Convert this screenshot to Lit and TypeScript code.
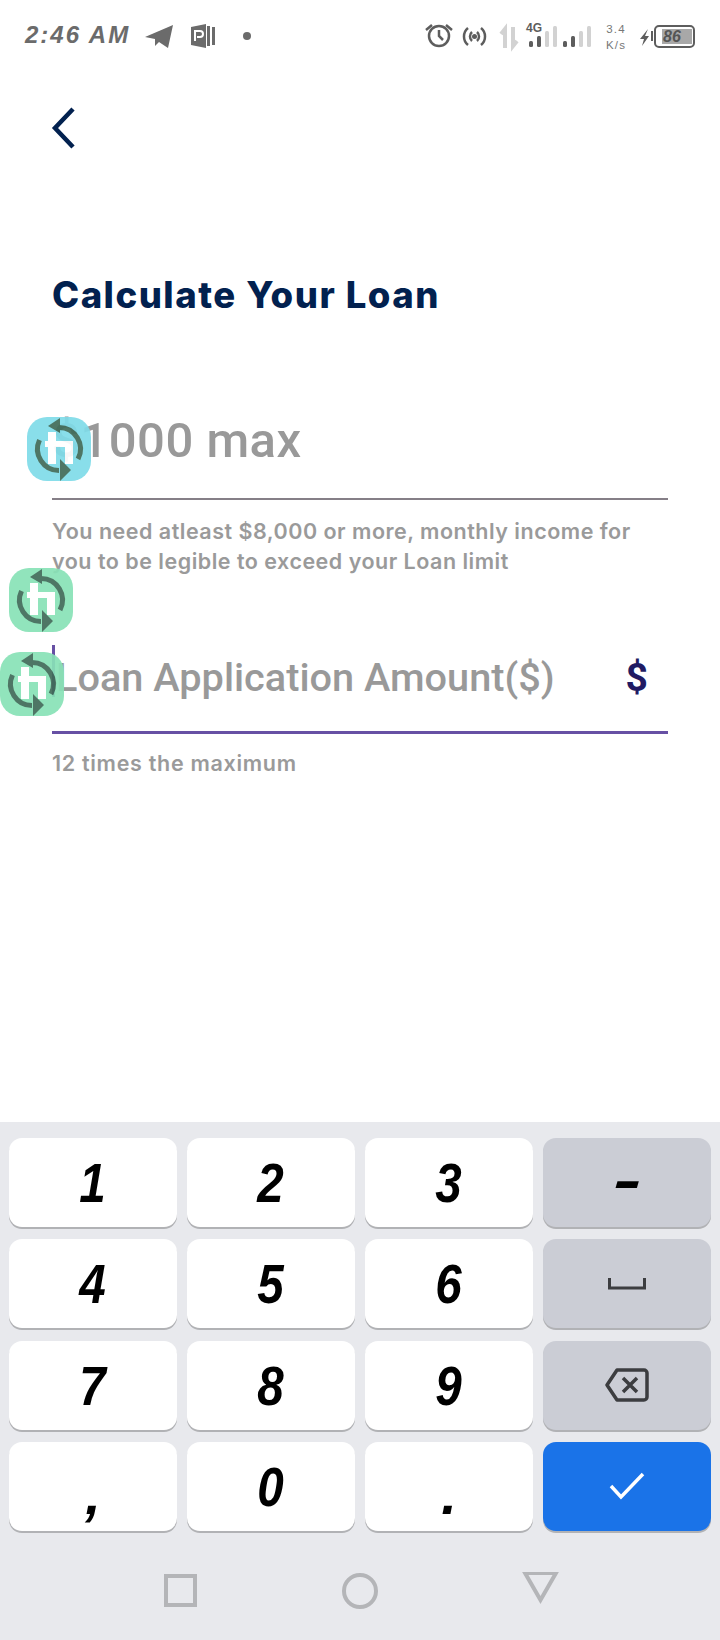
import { LitElement, html, css, svg } from 'lit';
import { customElement } from 'lit/decorators.js';

const syncIcon = (bg: string, cls: string) => html`
    <svg class="sync ${cls}" width="64" height="64" viewBox="0 0 64 64">
        <rect width="64" height="64" rx="20" fill="${bg}"></rect>
        <path d="M21 15h8v9h17v23h-8V30h-9v17h-8V30h-3v-6h3z" fill="#fff"></path>
        <path d="M32 10.500A21.500 21.500 0 0 1 51 42M12.500 23A21.500 21.500 0 0 0 32 53.500" fill="none" stroke="#3f6b58" stroke-width="5"></path>
        <path d="M21 9l12-8v15zM44 53L33 42v22z" fill="#3f6b58"></path>
    </svg>
`;

@customElement('app-root')
class AppRoot extends LitElement {
    static styles = css`
        :host {
            display: block;
            position: relative;
            width: 720px;
            height: 1640px;
            background: #fff;
            overflow: hidden;
            font-family: Roboto, sans-serif;
        }

        .status {
            height: 70px;
            display: flex;
            align-items: center;
            justify-content: space-between;
            padding: 0 20px 0 25px;
            box-sizing: border-box;
            color: #6b6b6b;
        }

        .status-left {
            display: flex;
            align-items: center;
        }

        .time {
            width: 120px;
            font: italic 700 24px 'Liberation Sans', sans-serif;
            letter-spacing: 2px;
            white-space: pre;
        }

        .back {
            display: block;
            margin: 36px 0 0 50px;
        }

        h1 {
            margin: 121px 0 0 52px;
            font: 800 36.500px/48px Inter, sans-serif;
            letter-spacing: 1.500px;
            color: #02214f;
        }

        .field {
            margin: 0 52px;
            display: flex;
            align-items: center;
            justify-content: space-between;
            box-sizing: border-box;
            color: #999;
            font-weight: 500;
        }

        .field.max {
            margin-top: 92px;
            height: 89px;
            padding-bottom: 29px;
            font-size: 49px;
            letter-spacing: 0.500px;
            border-bottom: 2px solid #857f87;
        }

        .field.amount {
            margin-top: 69px;
            height: 89px;
            font-size: 39.700px;
            border-bottom: 3px solid #6750a4;
        }

        .caret {
            width: 3px;
            height: 52px;
            background: #6750a4;
            margin: 0 1px 12px 0;
            flex: none;
        }

        .amount-label {
            display: flex;
            align-items: center;
            height: 52px;
            margin-bottom: 22px;
        }

        .dollar {
            font: 700 39px Roboto, sans-serif;
            color: #211b63;
            margin-right: 20px;
            margin-bottom: 20px;
        }

        .help {
            margin: 16px 52px 0;
            font: 600 21.500px/30px Inter, sans-serif;
            letter-spacing: 0.500px;
            color: #9a9a9a;
        }

        .help.short {
            margin-top: 14px;
            letter-spacing: 0.700px;
        }

        .sync {
            position: absolute;
            opacity: 0.92;
        }

        .sync.one {
            left: 27px;
            top: 417px;
        }

        .sync.two {
            left: 9px;
            top: 568px;
        }

        .sync.three {
            left: 0;
            top: 652px;
        }

        .keyboard {
            position: absolute;
            left: 0;
            right: 0;
            bottom: 0;
            height: 518px;
            background: #e8e9ed;
            box-sizing: border-box;
            padding-top: 16px;
        }

        .keys {
            display: grid;
            grid-template-columns: repeat(4, 168px);
            grid-auto-rows: 89px;
            column-gap: 10px;
            row-gap: 12.300px;
            padding: 0 9px;
        }

        .key {
            display: flex;
            align-items: center;
            justify-content: center;
            background: #fff;
            border-radius: 13px;
            box-shadow: 0 2px 0 #b1b2b5;
            color: #000;
            font: italic 700 56px 'Liberation Sans', sans-serif;
        }

        .key span {
            transform: scaleX(0.85);
        }

        .key.fn {
            background: #cbcdd5;
        }

        .key.ok {
            background: #1a73e8;
        }

        .key.low span {
            transform: translateY(8px);
        }

        .key.dash span {
            transform: translateY(-3px) scaleX(1.500);
        }

        .nav {
            margin-top: 41px;
        }

        .nav svg {
            display: block;
        }
    `;

    render() {
        return html`
            <div class="status">
                <div class="status-left">
                    <span class="time">2:46 AM</span>
                    ${this.renderLeftIcons()}
                </div>
                ${this.renderRightIcons()}
            </div>

            <svg class="back" width="26" height="44" viewBox="0 0 26 44">
                <path d="M23 3L5 22l18 19" fill="none" stroke="#02214f" stroke-width="4.500"></path>
            </svg>

            <h1>Calculate Your Loan</h1>

            <div class="field max"><span>$1000 max</span></div>
            <div class="help">You need atleast $8,000 or more, monthly income for<br />you to be legible to exceed your Loan limit</div>

            <div class="field amount">
                <div class="amount-label"><i class="caret"></i><span>Loan Application Amount($)</span></div>
                <span class="dollar">$</span>
            </div>
            <div class="help short">12 times the maximum</div>

            ${syncIcon('#80dce9', 'one')}
            ${syncIcon('#88e2b7', 'two')}
            ${syncIcon('#88e2b7', 'three')}

            <div class="keyboard">
                <div class="keys">
                    ${this.renderKey('1')}
                    ${this.renderKey('2')}
                    ${this.renderKey('3')}
                    ${this.renderKey('-', 'fn dash')}
                    ${this.renderKey('4')}
                    ${this.renderKey('5')}
                    ${this.renderKey('6')}
                    <div class="key fn">
                        <svg width="38" height="12" viewBox="0 0 38 12">
                            <path d="M1.500 0v10h35V0" fill="none" stroke="#3c3d40" stroke-width="3"></path>
                        </svg>
                    </div>
                    ${this.renderKey('7')}
                    ${this.renderKey('8')}
                    ${this.renderKey('9')}
                    <div class="key fn">
                        <svg width="44" height="34" viewBox="0 0 44 34">
                            <path d="M12 2h27a3 3 0 0 1 3 3v24a3 3 0 0 1-3 3H12L2 17z" fill="none" stroke="#3c3d40" stroke-width="3.500" stroke-linejoin="round"></path>
                            <path d="M18 10l14 14M32 10L18 24" fill="none" stroke="#3c3d40" stroke-width="3.500"></path>
                        </svg>
                    </div>
                    ${this.renderKey(',', 'low')}
                    ${this.renderKey('0')}
                    ${this.renderKey('.', 'low')}
                    <div class="key ok">
                        <svg width="36" height="28" viewBox="0 0 36 28">
                            <path d="M2 14l10 11L34 2" fill="none" stroke="#fff" stroke-width="3.500"></path>
                        </svg>
                    </div>
                </div>
                <div class="nav">${this.renderNav()}</div>
            </div>
        `;
    }

    renderKey(label: string, extra = '') {
        return html`<div class="key ${extra}"><span>${label}</span></div>`;
    }

    renderNav() {
        return html`
            <svg width="720" height="44" viewBox="0 0 720 44">
                <rect x="166" y="4" width="29" height="29" fill="none" stroke="#b4b5b8" stroke-width="4"></rect>
                <circle cx="360" cy="19" r="16" fill="none" stroke="#b4b5b8" stroke-width="4"></circle>
                <path d="M525 1h31l-15.500 27z" fill="none" stroke="#b4b5b8" stroke-width="4"></path>
            </svg>
        `;
    }

    // viewBox uses page x coordinates so the icons can be read off the reference
    renderLeftIcons() {
        return html`
            <svg width="110" height="70" viewBox="145 0 110 70">
                <path d="M145 37l28-12-5 23-9-6-4 4v-7z" fill="#6b6b6b"></path>
                <path d="M191 27l15-3v24l-15-3z" fill="#6b6b6b"></path>
                <path d="M195 41V31h5a2.500 2.500 0 0 1 0 6h-3" fill="none" stroke="#fff" stroke-width="2"></path>
                <rect x="207" y="26" width="3" height="20" fill="#6b6b6b"></rect>
                <rect x="212" y="27" width="3" height="18" fill="#6b6b6b"></rect>
                <circle cx="247" cy="36" r="4" fill="#6b6b6b"></circle>
            </svg>
        `;
    }

    renderRightIcons() {
        const bars = (x: number) =>
            [6, 11, 16, 21].map((h, i) => {
                const on = i < 2;
                return svg`<rect x="${x + i * 8}" y="${47 - h}" width="4" height="${h}" rx="1.500" fill="${on ? '#5d5d5d' : '#d2d2d2'}"></rect>`;
            });
        return html`
            <svg width="280" height="70" viewBox="420 0 280 70">
                <g fill="none" stroke="#5d5d5d" stroke-width="2.500">
                    <circle cx="439" cy="36" r="10"></circle>
                    <path d="M439 30v6l4 4M426 30l6-5M452 30l-6-5"></path>
                    <path d="M468 28a11 11 0 0 0 0 17M472 32a6 6 0 0 0 0 9M481 28a11 11 0 0 1 0 17M477 32a6 6 0 0 1 0 9"></path>
                </g>
                <circle cx="474.500" cy="36.500" r="2.500" fill="#5d5d5d"></circle>
                <path d="M505 48V29l-4 5M513 27v19l4-5" fill="none" stroke="#d2d2d2" stroke-width="4"></path>
                <text x="526" y="32" font-family="Liberation Sans" font-weight="700" font-size="12" fill="#5d5d5d">4G</text>
                ${bars(529)}
                ${bars(563)}
                <g font-family="Liberation Sans" font-size="11.500" fill="#777" letter-spacing="1.200" text-anchor="middle">
                    <text x="616" y="33">3.4</text>
                    <text x="616" y="49">K/s</text>
                </g>
                <path d="M648 29l-8 10h4l-2 7 7-10h-4z" fill="#5d5d5d"></path>
                <rect x="651" y="31" width="2" height="10" fill="#5d5d5d"></rect>
                <rect x="655" y="26" width="39" height="21" rx="4" fill="none" stroke="#5d5d5d" stroke-width="2"></rect>
                <rect x="662" y="29" width="30" height="15" fill="#a8a8a8"></rect>
                <text x="663" y="42" font-family="Liberation Sans" font-style="italic" font-weight="700" font-size="16" fill="#555">86</text>
            </svg>
        `;
    }
}

declare global {
    interface HTMLElementTagNameMap {
        'app-root': AppRoot;
    }
}
